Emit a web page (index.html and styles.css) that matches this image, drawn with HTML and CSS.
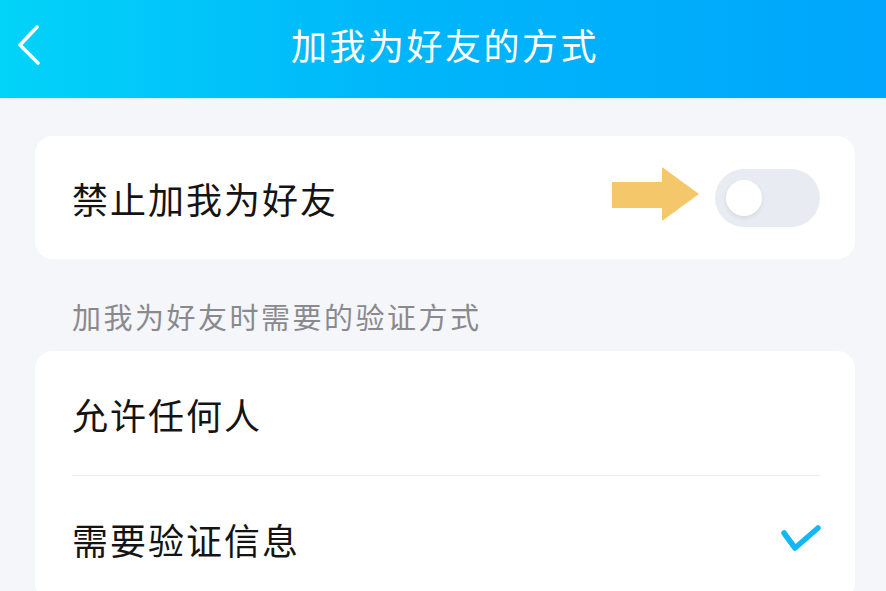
FILE: index.html
```html
<!DOCTYPE html>
<html>
<head>
  <meta charset="utf-8">
  <title>加我为好友的方式</title>
  <link rel="stylesheet" href="styles.css">
</head>
<body>
  <div class="header">
    <span class="back">
      <svg width="30" height="44" viewBox="0 0 30 44">
        <polyline points="20,5 3,23 21,41" fill="none" stroke="#fff" stroke-width="3.6" stroke-linecap="round" stroke-linejoin="round"/>
      </svg>
    </span>
    <span class="title">加我为好友的方式</span>
  </div>

  <div class="content">
    <div class="card">
      <div class="row">
        <span class="rowText">禁止加我为好友</span>
        <div class="rightSection">
          <svg class="arrow" width="87" height="54" viewBox="0 0 87 54">
            <polygon points="0,15 50,15 50,0 87,27 50,54 50,41 0,41" fill="#f5c76b"/>
          </svg>
          <div class="toggle"><div class="knob"></div></div>
        </div>
      </div>
    </div>

    <div class="sectionLabel">加我为好友时需要的验证方式</div>

    <div class="card">
      <div class="row divided">
        <span class="rowText">允许任何人</span>
      </div>
      <div class="row">
        <span class="rowText">需要验证信息</span>
        <svg class="check" width="40" height="30" viewBox="0 0 40 30">
          <polyline points="3,9 14,24 37,4" fill="none" stroke="#12b7f3" stroke-width="5.5" stroke-linecap="round" stroke-linejoin="round"/>
        </svg>
      </div>
    </div>
  </div>
</body>
</html>
```

FILE: styles.css
```css
body {
  margin: 0;
  background-color: #f5f6fa;
  font-family: "Noto Sans CJK SC", "Noto Sans", sans-serif;
  overflow: hidden;
}

.header {
  height: 98px;
  background: linear-gradient(90deg, #02d3f9 0%, #00b6fa 45%, #00a6fb 100%);
  border-bottom: 2px solid #e3f4fd;
  display: flex;
  align-items: center;
  justify-content: center;
  position: relative;
}

.back {
  position: absolute;
  left: 17px;
  top: 22px;
}

.title {
  color: #fff;
  font-size: 36px;
  letter-spacing: 2.5px;
  margin-left: 4px;
  margin-top: -10px;
}

.content {
  padding: 0 31px 0 35px;
}

.card {
  background-color: #fff;
  border-radius: 18px;
  margin-top: 36px;
  overflow: hidden;
}

.row {
  height: 123px;
  display: flex;
  align-items: center;
  justify-content: space-between;
  padding: 0 35px 0 37px;
}

.card + .sectionLabel + .card .row {
  height: 125px;
}

.rowText {
  font-size: 36px;
  letter-spacing: 2px;
  color: #141414;
}

.divided {
  position: relative;
}

.divided::after {
  content: "";
  position: absolute;
  left: 37px;
  right: 35px;
  bottom: 0;
  height: 1px;
  background-color: #ededf0;
}

.rightSection {
  display: flex;
  align-items: center;
}

.arrow {
  margin-right: 16px;
  margin-top: -8px;
}

.toggle {
  width: 105px;
  height: 58px;
  border-radius: 29px;
  background-color: #e9ebf3;
  display: flex;
  align-items: center;
  padding-left: 11px;
  box-sizing: border-box;
}

.knob {
  width: 36px;
  height: 36px;
  border-radius: 50%;
  background-color: #fff;
  box-shadow: 0 2px 4px rgba(0, 0, 0, 0.08);
}

.sectionLabel {
  font-size: 29px;
  letter-spacing: 2.5px;
  color: #8a8a8e;
  padding: 37px 37px 0;
  line-height: 40px;
  margin-bottom: -21px;
}

.check {
  margin-right: -1px;
}
```
